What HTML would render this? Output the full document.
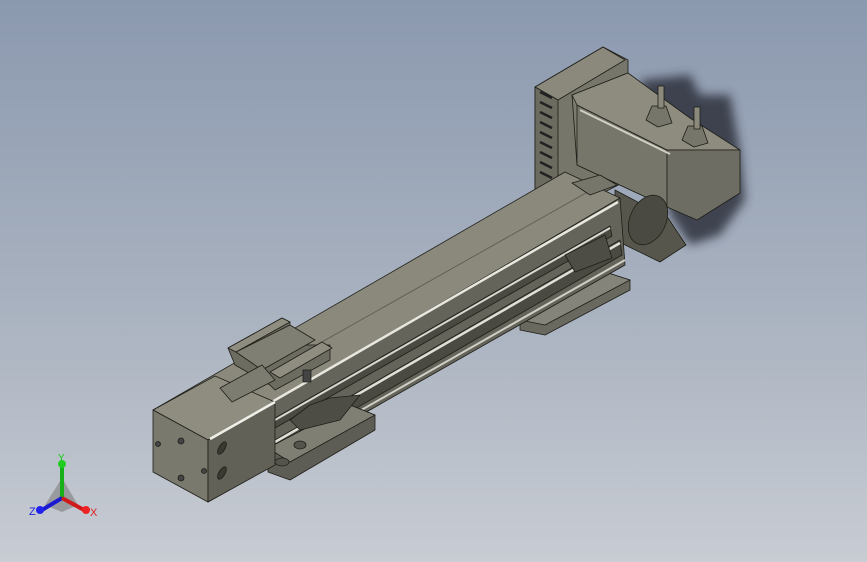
<!DOCTYPE html>
<html><head><style>
html,body{margin:0;padding:0;width:867px;height:562px;overflow:hidden}
body{background:linear-gradient(#8b99af,#a9b2c0 55%,#c8ccd3)}
svg{position:absolute;left:0;top:0}
</style></head><body>
<svg width="867" height="562" viewBox="0 0 867 562" stroke="#1e1e18" stroke-width="0.8" stroke-linejoin="round">
<defs><filter id="b"><feGaussianBlur stdDeviation="5"/></filter></defs>
<path d="M640,80 L690,75 L700,95 L730,95 L740,150 L745,200 L720,235 L690,245 L670,215 Z" fill="#2e323c" opacity="0.85" filter="url(#b)" stroke="none"/>
<!-- mount box -->
<polygon points="535,87 603,47 628,60 628,180 560,215 535,190" fill="#77766a"/>
<polygon points="535,87 603,47 625,60 558,100" fill="#8a897c"/>
<polygon points="535,87 558,100 558,205 535,190" fill="#6c6b60"/>
<g stroke="#222" stroke-width="2.5">
<line x1="540" y1="92" x2="552" y2="98"/><line x1="540" y1="102" x2="552" y2="108"/><line x1="540" y1="112" x2="552" y2="118"/><line x1="540" y1="122" x2="552" y2="128"/><line x1="540" y1="132" x2="552" y2="138"/><line x1="540" y1="142" x2="552" y2="148"/><line x1="540" y1="152" x2="552" y2="158"/><line x1="540" y1="162" x2="552" y2="168"/><line x1="540" y1="172" x2="552" y2="178"/></g>
<!-- motor -->
<polygon points="572,95 628,73 667,150 667,207 577,165" fill="#7c7b6e"/>
<polygon points="577,105 667,150 667,207 577,165" fill="#77766b"/>
<polygon points="572,95 628,73 690,118 740,150 667,150 577,105" fill="#8d8c7f"/>
<polygon points="667,150 740,150 740,193 697,220 667,207" fill="#6e6d63"/>
<line x1="580" y1="110" x2="670" y2="154" stroke="#cfcfc4" stroke-width="2"/>
<polygon points="646,120 652,106 666,106 672,123 658,127" fill="#77766a"/>
<rect x="658" y="86" width="6" height="22" fill="#8a897c"/>
<polygon points="682,140 688,126 702,126 708,143 694,147" fill="#77766a"/>
<rect x="694" y="107" width="6" height="22" fill="#8a897c"/>
<!-- end plate -->
<polygon points="615,190 668,218 686,245 660,262 615,240" fill="#57564d"/>
<ellipse cx="648" cy="220" rx="18" ry="26" fill="#4b4a42" transform="rotate(25 648 220)"/>
<!-- rear foot -->
<polygon points="520,320 605,272 630,280 630,290 545,335 520,330" fill="#6a6960"/>
<polygon points="520,320 605,272 630,280 545,325" fill="#85847a"/>
<!-- beam -->
<polygon points="153,410 565,172 620,198 208,440" fill="#8a897c"/>
<polygon points="208,440 620,198 625,265 208,502" fill="#65645b"/>
<line x1="213" y1="436" x2="618" y2="202" stroke="#e8e8e0" stroke-width="2.5"/>
<line x1="290" y1="360" x2="600" y2="185" stroke="#5a594f"/>
<polygon points="275,440 620,240 622,255 275,455" fill="#4a4942"/>
<line x1="275" y1="442" x2="620" y2="243" stroke="#e0e0d8" stroke-width="2.5"/>
<polygon points="275,418 610,226 612,236 275,428" fill="#4a4942"/>
<line x1="275" y1="420" x2="610" y2="228" stroke="#d8d8d0" stroke-width="2"/>
<line x1="270" y1="462" x2="625" y2="260" stroke="#cfcfc6" stroke-width="2"/>
<polygon points="572,183 600,175 617,185 590,195" fill="#77766a"/>
<!-- front foot -->
<polygon points="268,448 350,405 375,415 375,430 290,480 268,472" fill="#5e5d55"/>
<polygon points="268,448 350,405 375,415 290,462" fill="#807f74"/>
<ellipse cx="282" cy="462" rx="7" ry="4" fill="#55544c"/>
<ellipse cx="300" cy="445" rx="6" ry="4" fill="#55544c"/>
<!-- front box -->
<polygon points="153,410 215,376 275,402 208,440" fill="#8e8d80"/>
<polygon points="153,410 208,440 208,502 153,472" fill="#7a796d"/>
<polygon points="208,440 275,402 275,465 208,502" fill="#626158"/>
<line x1="210" y1="439" x2="275" y2="402" stroke="#f0f0ea" stroke-width="2.5"/>
<ellipse cx="222" cy="448" rx="3" ry="7" fill="#3a3a33" transform="rotate(30 222 448)"/>
<ellipse cx="222" cy="473" rx="3" ry="7" fill="#3a3a33" transform="rotate(30 222 473)"/>
<circle cx="181" cy="441" r="3" fill="#444"/><circle cx="181" cy="478" r="3" fill="#444"/><circle cx="158" cy="444" r="2.5" fill="#444"/><circle cx="204" cy="471" r="2.5" fill="#444"/>
<!-- carriage bracket -->
<polygon points="228,348 282,318 290,322 290,345 330,345 330,360 275,390 270,385 235,365" fill="#6d6c61"/>
<polygon points="228,348 282,318 290,322 236,352" fill="#8e8d80"/>
<polygon points="236,352 290,325 315,340 262,370" fill="#807f73"/>
<polygon points="270,372 322,342 332,348 280,378" fill="#8e8d80"/>
<polygon points="220,388 262,365 275,380 232,402" fill="#7d7c70"/>
<rect x="303" y="370" width="8" height="12" fill="#444"/>
<polygon points="290,420 310,405 330,398 360,395 340,420 300,430" fill="#4e4d45"/>
<polygon points="565,255 605,235 612,258 575,272" fill="#4e4d45"/>
</svg>
<svg width="867" height="562" style="font-family:'Liberation Sans',sans-serif">
<polygon points="62,478 45,505 62,512 78,505" fill="#777" opacity="0.55"/>
<line x1="62" y1="498" x2="62" y2="465" stroke="#18b018" stroke-width="4"/>
<circle cx="62" cy="464" r="4" fill="#2c2"/>
<line x1="62" y1="498" x2="42" y2="510" stroke="#1a1ad0" stroke-width="4"/>
<circle cx="40" cy="510" r="4" fill="#22e"/>
<line x1="62" y1="498" x2="84" y2="510" stroke="#d01a1a" stroke-width="4"/>
<circle cx="86" cy="510" r="4" fill="#e22"/>
<text x="58" y="461" font-size="10" fill="#1c1">Y</text>
<text x="29" y="515" font-size="11" fill="#22d">Z</text>
<text x="90" y="516" font-size="11" fill="#d22">X</text>
</svg>
</body></html>
